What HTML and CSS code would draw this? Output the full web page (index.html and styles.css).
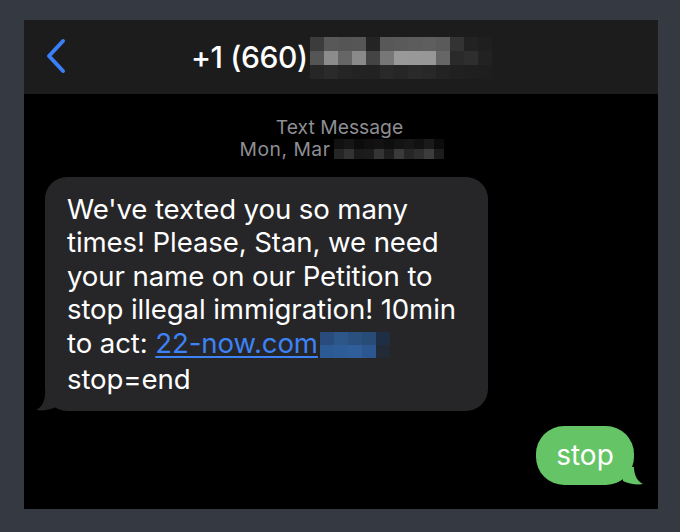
FILE: index.html
```html
<!DOCTYPE html>
<html>
<head>
<meta charset="utf-8">
<link rel="stylesheet" href="styles.css">
</head>
<body>
<div class="screen">
  <header class="nav">
    <svg class="back" width="20" height="36" viewBox="0 0 20 36"><path d="M17 3 L3 18 L17 33" fill="none" stroke="#3a7ff6" stroke-width="4" stroke-linecap="round" stroke-linejoin="round"/></svg>
    <div class="title">+1 (660)<span class="mosaic m-title">
      <i style="background:#3c3c3c"></i><i style="background:#585858"></i><i style="background:#555"></i><i style="background:#565656"></i><i style="background:#242424"></i><i style="background:#585858"></i><i style="background:#5a5a5a"></i><i style="background:#5c5c5c"></i><i style="background:#5e5e5e"></i><i style="background:#5a5a5a"></i><i style="background:#333"></i><i style="background:#222"></i><i style="background:#1f1f1f"></i>
      <i style="background:#555"></i><i style="background:#8c8c8c"></i><i style="background:#666"></i><i style="background:#8a8a8a"></i><i style="background:#444"></i><i style="background:#777"></i><i style="background:#999"></i><i style="background:#989898"></i><i style="background:#979797"></i><i style="background:#666"></i><i style="background:#2a2a2a"></i><i style="background:#2e2e2e"></i><i style="background:#222"></i>
      <i style="background:#262626"></i><i style="background:#2a2a2a"></i><i style="background:#252525"></i><i style="background:#232323"></i><i style="background:#222"></i><i style="background:#292929"></i><i style="background:#262626"></i><i style="background:#2a2a2a"></i><i style="background:#282828"></i><i style="background:#232323"></i><i style="background:#202020"></i><i style="background:#1f1f1f"></i><i style="background:#1e1e1e"></i>
    </span></div>
  </header>
  <main class="thread">
    <div class="meta">
      <div class="meta-line head">Text Message</div>
      <div class="meta-line date">Mon, Mar<span class="mosaic m-date">
        <i style="background:#111"></i><i style="background:#161616"></i><i style="background:#0c0c0c"></i><i style="background:#101010"></i><i style="background:#121212"></i><i style="background:#0e0e0e"></i><i style="background:#131313"></i><i style="background:#161616"></i><i style="background:#111"></i><i style="background:#1a1a1a"></i><i style="background:#0c0c0c"></i>
        <i style="background:#252525"></i><i style="background:#333"></i><i style="background:#1a1a1a"></i><i style="background:#1c1c1c"></i><i style="background:#343434"></i><i style="background:#1e1e1e"></i><i style="background:#3a3a3a"></i><i style="background:#262626"></i><i style="background:#2e2e2e"></i><i style="background:#3c3c3c"></i><i style="background:#1c1c1c"></i>
      </span></div>
    </div>
    <div class="row in">
      <div class="bubble incoming">We've texted you so many<br>times! Please, Stan, we need<br>your name on our Petition to<br>stop illegal immigration! 10min<br>to act: <span class="link">22-now.com</span><span class="mosaic m-link">
        <i style="background:#2a4c7c"></i><i style="background:#2d5689"></i><i style="background:#2a5080"></i><i style="background:#284c78"></i><i style="background:#1e2e44"></i>
        <i style="background:#2c5a94"></i><i style="background:#2e5c96"></i><i style="background:#2f5e9a"></i><i style="background:#2b5690"></i><i style="background:#222a36"></i>
      </span><br><span class="last">stop=end</span>
        <svg class="tail tail-in" width="20" height="18" viewBox="0 0 20 18"><path d="M20 0 L20 14 C14 17 6 18 0 17 C6 14 9 8 9 0 Z" fill="#262628"/></svg>
      </div>
    </div>
    <div class="row out">
      <div class="bubble outgoing">stop
        <svg class="tail tail-out" width="20" height="18" viewBox="0 0 20 18"><path d="M0 0 L0 14 C6 17 14 18 20 17 C14 14 11 8 11 0 Z" fill="#65c466"/></svg>
      </div>
    </div>
  </main>
</div>
</body>
</html>
```
FILE: styles.css
```css
* { box-sizing: border-box; }
html, body { margin: 0; padding: 0; }
body {
  background: #353a42;
  width: 680px;
  height: 532px;
  padding: 20px 22px 23px 24px;
  font-family: "Inter", "Liberation Sans", sans-serif;
}
.screen {
  width: 634px;
  height: 489px;
  background: #000;
  display: flex;
  flex-direction: column;
}
.nav {
  height: 74px;
  background: #1c1c1c;
  display: flex;
  align-items: center;
  padding-left: 22px;
}
.back { display: block; margin-top: -2px; }
.title {
  margin-left: 125px;
  color: #fff;
  font-size: 30px;
  font-weight: 500;
  display: flex;
  align-items: center;
  letter-spacing: -0.4px;
  margin-top: -1px;
}
.mosaic i { display: block; }
.m-title {
  display: inline-grid;
  grid-template-columns: repeat(13, 14px);
  grid-auto-rows: 14px;
  margin-left: 2px;
  margin-top: 2px;
}
.m-date {
  display: inline-grid;
  grid-template-columns: repeat(11, 10px);
  grid-auto-rows: 10px;
  margin-left: 4px;
}
.m-link {
  display: inline-grid;
  grid-template-columns: repeat(5, 14px);
  grid-auto-rows: 13px;
  height: 26px;
  vertical-align: middle;
  margin-left: 2px;
}
.thread {
  flex: 1;
  display: flex;
  flex-direction: column;
  padding: 22px 0 0 0;
}
.meta {
  text-align: center;
  color: #8e8e93;
  font-size: 19.3px;
  line-height: 22px;
}
.meta-line.head { padding-right: 3px; }
.meta-line.date { display: flex; align-items: center; justify-content: center; letter-spacing: 0.5px; padding-left: 2px; }
.row { display: flex; }
.row.in { margin-top: 17px; padding-left: 21px; }
.row.out { justify-content: flex-end; margin-top: 15px; padding-right: 24px; }
.bubble { position: relative; color: #fff; }
.incoming {
  background: #262628;
  border-radius: 22px;
  width: 443px;
  padding: 16px 10px 15px 22px;
  font-size: 27.6px;
  line-height: 33.4px;
  letter-spacing: -0.1px;
}
.last { display: inline-block; margin-top: 3px; }
.link { color: #3d82f6; text-decoration: underline; text-decoration-thickness: 1.5px; text-underline-offset: 3px; }
.outgoing {
  background: #65c466;
  border-radius: 28px;
  width: 98px;
  height: 59px;
  display: flex;
  align-items: center;
  justify-content: center;
  font-size: 28px;
  padding-bottom: 1px;
}
.tail { position: absolute; bottom: 0; }
.tail-in { left: -9px; }
.tail-out { right: -9px; }
```
